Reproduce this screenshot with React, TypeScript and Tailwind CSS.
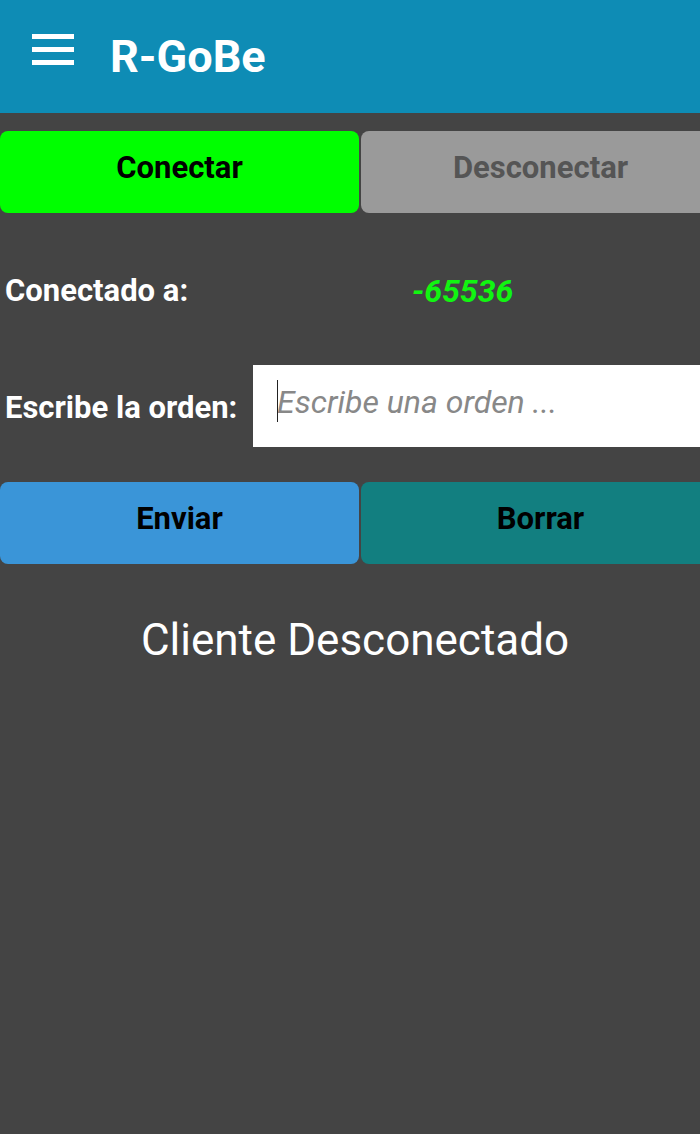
export default function App() {
  return (
    <div
      className="w-[700px] h-[1134px] bg-[#444444] overflow-hidden flex flex-col"
      style={{ fontFamily: 'Roboto, "Liberation Sans", sans-serif' }}
    >
      {/* Toolbar */}
      <div className="h-[113px] bg-[#0e8cb5] flex items-center shrink-0">
        <div className="ml-[32px] w-[42px] flex flex-col gap-[8px] mt-[-14px]">
          <div className="h-[5px] bg-white" />
          <div className="h-[5px] bg-white" />
          <div className="h-[5px] bg-white" />
        </div>
        <h1 className="ml-[36px] text-[45px] font-bold text-white">R-GoBe</h1>
      </div>

      {/* Connect buttons */}
      <div className="mt-[18px] flex gap-[2px] h-[82px]">
        <button className="w-[359px] shrink-0 h-full bg-[#00ff00] rounded-[8px] text-[31px] font-bold text-black pb-[8px]">
          Conectar
        </button>
        <button className="w-[359px] shrink-0 h-full bg-[#9a9a9a] rounded-[8px] text-[31px] font-bold text-[#555555] pb-[8px]">
          Desconectar
        </button>
      </div>

      {/* Connected to */}
      <div className="mt-[56px] flex items-center h-[44px]">
        <span className="ml-[5px] w-[407px] text-[31px] font-bold text-white">Conectado a:</span>
        <span className="text-[32px] font-bold italic text-[#11f511]">-65536</span>
      </div>

      {/* Order input */}
      <div className="mt-[52px] flex items-center h-[82px]">
        <span className="ml-[5px] w-[248px] text-[31px] font-bold text-white pt-[4px]">Escribe la orden:</span>
        <div className="flex-1 h-full bg-white flex items-center pl-[24px] relative">
          <div className="w-[1px] h-[42px] bg-[#222] absolute left-[24px] top-[15px]" />
          <span className="text-[32px] italic text-[#888888] pb-[8px]">Escribe una orden ...</span>
        </div>
      </div>

      {/* Send buttons */}
      <div className="mt-[35px] flex gap-[2px] h-[82px]">
        <button className="w-[359px] shrink-0 h-full bg-[#3a95d8] rounded-[8px] text-[31px] font-bold text-black pb-[8px]">
          Enviar
        </button>
        <button className="w-[359px] shrink-0 h-full bg-[#127f80] rounded-[8px] text-[31px] font-bold text-black pb-[8px]">
          Borrar
        </button>
      </div>

      <p className="mt-[43px] text-center text-[44px] text-white pl-[10px]">Cliente Desconectado</p>
    </div>
  )
}
